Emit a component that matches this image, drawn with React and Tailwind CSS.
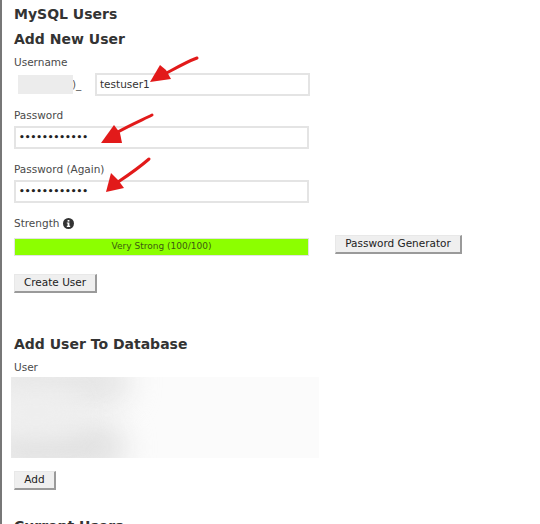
import React from 'react'

const inputBox = "h-[23px] border-2 border-[#e4e4e4] bg-white px-[3px] flex items-center text-[10.5px] text-[#333]"
const btn = "flex items-center justify-center bg-[#efefef] border-r-2 border-b-2 border-[#9a9a9a] border-t border-l border-t-[#e8e8e8] border-l-[#e8e8e8] text-[10.5px] text-[#222]"
const label = "text-[10.5px] leading-[14px] text-[#4a4a4a]"
const h2 = "text-[14px] leading-[18px] font-bold text-[#333]"

const Dots = () => <span className="text-[9px] font-bold text-[#222]">••••••••••••</span>

// red marker arrows drawn over the form, in page coordinates
const Arrows = () => (
  <svg className="absolute -left-[2px] top-0" width="540" height="524" viewBox="0 0 540 524" fill="none">
    <path d="M197 58 C186 62 176 68 165 74" stroke="#e21a1a" strokeWidth="3" strokeLinecap="round" />
    <path d="M150 82 L160 65 L166 70 L171 79 Z" fill="#e21a1a" />
    <path d="M152 115 C142 120 130 125 116 133" stroke="#e21a1a" strokeWidth="3" strokeLinecap="round" />
    <path d="M101 143 L114 125 L120 133 L122 143 Z" fill="#e21a1a" />
    <path d="M149 159 C141 166 130 174 118 182" stroke="#e21a1a" strokeWidth="3" strokeLinecap="round" />
    <path d="M106 192 L111 173 L118 180 L124 188 Z" fill="#e21a1a" />
  </svg>
)

export default function App() {
  return (
    <div className="relative w-[540px] h-[524px] overflow-hidden bg-white border-l-2 border-[#777] pl-3 font-['DejaVu_Sans',sans-serif]">
      <h1 className="mt-[5px] text-[14px] leading-[18px] font-bold text-[#333]">MySQL Users</h1>
      <h2 className={`mt-[7px] ${h2}`}>Add New User</h2>

      <div className={`mt-[7px] ${label}`}>Username</div>
      <div className="mt-[4px] flex items-center">
        <div className="w-[81px] h-[22px] text-[10.5px] text-[#555] flex items-center">
          <div className="ml-[4px] w-[55px] h-[19px] bg-[#ececec] blur-[0.5px]" />
          <span className="-ml-[1px]">)_</span>
        </div>
        <div className={`w-[215px] ${inputBox}`}>testuser1</div>
      </div>

      <div className={`mt-[12px] ${label}`}>Password</div>
      <div className={`mt-[4px] w-[295px] ${inputBox}`}><Dots /></div>

      <div className={`mt-[13px] ${label}`}>Password (Again)</div>
      <div className={`mt-[4px] w-[295px] ${inputBox}`}><Dots /></div>

      <div className={`mt-[13px] flex items-center gap-[4px] ${label}`}>
        Strength
        <svg width="11" height="11" viewBox="0 0 11 11">
          <circle cx="5.5" cy="5.5" r="5.5" fill="#333" />
          <rect x="4.6" y="2" width="1.8" height="1.6" fill="#fff" />
          <path d="M3.8 4.5 H6.4 V7.8 H7.2 V8.9 H3.8 V7.8 H4.6 V5.6 H3.8 Z" fill="#fff" />
        </svg>
      </div>

      <div className="mt-[5px] flex items-start">
        <div className="mt-[3px] w-[295px] h-[18px] bg-[#8cff00] border border-[#e2e2e2] flex items-center justify-center text-[9px] text-[#3c5a10]">
          Very Strong (100/100)
        </div>
        <button className={`ml-[26px] w-[127px] h-[19px] ${btn}`}>Password Generator</button>
      </div>

      <button className={`mt-[18px] w-[83px] h-[19px] ${btn}`}>Create User</button>

      <h2 className={`mt-[42px] ${h2}`}>Add User To Database</h2>
      <div className={`mt-[7px] ${label}`}>User</div>

      <div className="relative mt-[3px] -ml-[3px] w-[308px] h-[81px] overflow-hidden bg-[#fbfbfb]">
        <div className="absolute -left-[20px] -top-[20px] w-[140px] h-[50px] rounded-full bg-[#e6e6e6] blur-[14px]" />
        <div className="absolute -left-[20px] top-[45px] w-[135px] h-[50px] rounded-full bg-[#e2e2e2] blur-[14px]" />
        <div className="absolute -left-[20px] top-[10px] w-[90px] h-[50px] rounded-full bg-[#eeeeee] blur-[14px]" />
      </div>

      <button className={`mt-[13px] w-[42px] h-[19px] ${btn}`}>Add</button>

      <h2 className={`mt-[27px] ${h2}`}>Current Users</h2>

      <Arrows />
    </div>
  )
}
